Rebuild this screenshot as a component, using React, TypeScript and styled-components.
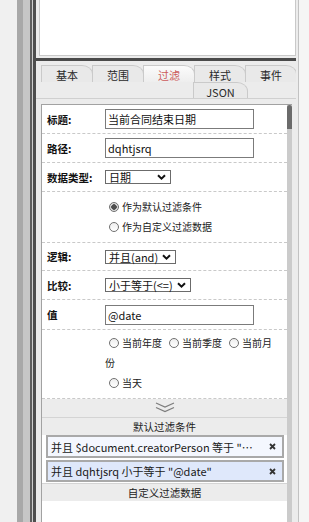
import React from 'react';
import styled, { createGlobalStyle } from 'styled-components';

const GlobalStyle = createGlobalStyle`
    * { box-sizing: border-box; }
    html, body { margin: 0; padding: 0; }
    body {
        font-family: "Noto Sans CJK SC", "Noto Sans", sans-serif;
        color: #1a1a1a;
        background: #f0f0f0;
    }
`;

const tabs = ['基本', '范围', '过滤', '样式', '事件'];
const periods = ['当前年度', '当前季度', '当前月份'];

const ChevronDown = () => (
    <svg width="9" height="6" viewBox="0 0 9 6">
        <path d="M1 1.2 L4.5 4.6 L8 1.2" fill="none" stroke="#111" strokeWidth="2" />
    </svg>
);

const CloseIcon = () => (
    <svg width="7" height="7" viewBox="0 0 7 7">
        <path d="M1 1 L6 6 M6 1 L1 6" stroke="#333" strokeWidth="1.8" />
    </svg>
);

const ExpandIcon = () => (
    <svg width="20" height="11" viewBox="0 0 20 11">
        <path d="M1 1 L10 5 L19 1 M1 5.5 L10 9.5 L19 5.5" fill="none" stroke="#7d7d7d" strokeWidth="1.2" />
    </svg>
);

const App = () => {
    return (
        <Page>
            <GlobalStyle />
            <LeftDock />
            <Splitter />
            <Panel>
                <Preview />
                <DarkBar />
                <TabStrip>
                    <TabRow $h={17}>
                        {tabs.map((t) => (
                            <Tab key={t} $active={t === '过滤'}>
                                {t}
                            </Tab>
                        ))}
                    </TabRow>
                    <TabRow $h={16} $offset={152}>
                        <Tab $wide>JSON</Tab>
                    </TabRow>
                </TabStrip>
                <Body>
                    <ScrollBox>
                        <Content>
                            <FieldRow $h={28}>
                                <Label>标题:</Label>
                                <TextInput readOnly defaultValue="当前合同结束日期" />
                            </FieldRow>
                            <FieldRow $h={28}>
                                <Label>路径:</Label>
                                <TextInput readOnly defaultValue="dqhtjsrq" />
                            </FieldRow>
                            <FieldRow $h={28}>
                                <Label>数据类型:</Label>
                                <Select $w={66}>
                                    日期
                                    <ChevronDown />
                                </Select>
                            </FieldRow>
                            <FieldRow $h={50} $top>
                                <Label />
                                <Options>
                                    <OptionLine>
                                        <RadioDot $checked />
                                        作为默认过滤条件
                                    </OptionLine>
                                    <OptionLine>
                                        <RadioDot />
                                        作为自定义过滤数据
                                    </OptionLine>
                                </Options>
                            </FieldRow>
                            <FieldRow $h={27}>
                                <Label>逻辑:</Label>
                                <Select>
                                    并且(and)
                                    <ChevronDown />
                                </Select>
                            </FieldRow>
                            <FieldRow $h={28}>
                                <Label>比较:</Label>
                                <Select>
                                    小于等于(&lt;=)
                                    <ChevronDown />
                                </Select>
                            </FieldRow>
                            <FieldRow $h={29}>
                                <Label>值</Label>
                                <TextInput readOnly defaultValue="@date" />
                            </FieldRow>
                            <FieldRow $h={68} $top>
                                <Label />
                                <Options $pad={3}>
                                    <WrapLine>
                                        {periods.map((p) => (
                                            <Choice key={p}>
                                                <RadioDot />
                                                {p}
                                            </Choice>
                                        ))}
                                    </WrapLine>
                                    <OptionLine>
                                        <RadioDot />
                                        当天
                                    </OptionLine>
                                </Options>
                            </FieldRow>
                            <Expander>
                                <ExpandIcon />
                            </Expander>
                            <SectionHeader>默认过滤条件</SectionHeader>
                            <ConditionList>
                                <Condition>
                                    <ConditionText>并且 $document.creatorPerson 等于 "@person"</ConditionText>
                                    <CloseIcon />
                                </Condition>
                                <Condition $selected>
                                    <ConditionText>并且 dqhtjsrq 小于等于 "@date"</ConditionText>
                                    <CloseIcon />
                                </Condition>
                            </ConditionList>
                            <SectionHeader $line>自定义过滤数据</SectionHeader>
                        </Content>
                        <Scrollbar>
                            <Thumb />
                        </Scrollbar>
                    </ScrollBox>
                </Body>
            </Panel>
            <RightEdge />
        </Page>
    );
};

const Page = styled.div`
    display: flex;
    width: 309px;
    height: 522px;
    overflow: hidden;
    background: #f0f0f0;
`;

const LeftDock = styled.div`
    width: 17px;
    background: #f0f0f0;
`;

// splitter handle + the dark frame edge of the property panel
const Splitter = styled.div`
    width: 19px;
    background: linear-gradient(
        to right,
        #a8a8a8 0 6px,
        #c6c6c6 6px 13px,
        #5e5e5e 13px 15px,
        #cfcfcf 15px 16px,
        #4e4e4e 16px 19px
    );
`;

const Panel = styled.div`
    width: 260px;
    display: flex;
    flex-direction: column;
    background: #ececec;
`;

const Preview = styled.div`
    height: 56px;
    margin-left: 3px;
    background: #fff;
    border: 1px solid #c9c9c9;
    border-top: none;
`;

const DarkBar = styled.div`
    height: 3px;
    margin-top: 2px;
    background: #4a4a4a;
`;

const TabStrip = styled.div`
    padding: 4px 0 0 5px;
    border-bottom: 1px solid #d0d0d0;
`;

const TabRow = styled.div<{ $h: number; $offset?: number }>`
    display: flex;
    height: ${(p) => p.$h}px;
    padding-left: ${(p) => p.$offset || 0}px;
`;

const Tab = styled.div<{ $active?: boolean; $wide?: boolean }>`
    width: ${(p) => (p.$wide ? 55 : 52)}px;
    margin-right: -1px;
    padding-top: 2px;
    border: 1px solid #cacaca;
    border-bottom: none;
    border-top-right-radius: 11px 9px;
    background: ${(p) => (p.$active ? 'linear-gradient(#fbfbfb, #eeeeee)' : '#e9e9e9')};
    color: ${(p) => (p.$active ? '#cc5b5b' : '#2a2a2a')};
    font-size: 11px;
    line-height: 14px;
    text-align: center;
`;

const Body = styled.div`
    flex: 1;
    display: flex;
    min-height: 0;
    padding: 5px 4px 0 5px;
`;

const ScrollBox = styled.div`
    flex: 1;
    display: flex;
    border-left: 1px solid #a2a2a2;
    border-top: 1px solid #a2a2a2;
    background: #fff;
    overflow: hidden;
`;

const Content = styled.div`
    flex: 1;
    min-width: 0;
`;

const Scrollbar = styled.div`
    width: 5px;
    background: #cbcbcb;
`;

const Thumb = styled.div`
    height: 24px;
    background: #6b6b6b;
    border-radius: 3px 3px 0 0;
`;

const FieldRow = styled.div<{ $h: number; $top?: boolean }>`
    display: flex;
    align-items: ${(p) => (p.$top ? 'flex-start' : 'center')};
    height: ${(p) => p.$h + 1}px;
    padding-left: 5px;
    border-bottom: 1px dashed #c9c9c9;
`;

const Label = styled.div`
    width: 58px;
    flex-shrink: 0;
    font-size: 10.5px;
    font-weight: 700;
    color: #111;
`;

const TextInput = styled.input`
    width: 149px;
    height: 20px;
    padding: 0 2px;
    border: 1px solid #7b7b7b;
    border-radius: 0;
    outline: none;
    font: inherit;
    font-size: 11px;
    color: #111;
    background: #fff;
`;

const Select = styled.div<{ $w?: number }>`
    display: flex;
    align-items: center;
    justify-content: space-between;
    gap: 4px;
    width: ${(p) => (p.$w ? `${p.$w}px` : 'auto')};
    height: 14px;
    padding: 0 4px 0 3px;
    border: 1px solid #6b6b6b;
    font-size: 11px;
    line-height: 12px;
    color: #111;
`;

const Options = styled.div<{ $pad?: number }>`
    padding-top: ${(p) => p.$pad ?? 5}px;
    font-size: 10px;
    line-height: 20px;
    color: #222;
`;

const OptionLine = styled.div`
    display: flex;
    align-items: center;
    height: 20px;
`;

const WrapLine = styled.div`
    width: 170px;
`;

const Choice = styled.span`
    margin-right: 3px;
`;

const RadioDot = styled.span<{ $checked?: boolean }>`
    display: inline-block;
    vertical-align: -1px;
    width: 10px;
    height: 10px;
    margin: 0 3px 0 4px;
    border: 1px solid #707070;
    border-radius: 50%;
    background: ${(p) =>
        p.$checked
            ? 'radial-gradient(circle, #4e4e4e 0 2.5px, #dcdcdc 3px)'
            : 'linear-gradient(#eeeeee, #ffffff)'};
`;

const Expander = styled.div`
    display: flex;
    justify-content: center;
    align-items: center;
    height: 19px;
    padding-bottom: 2px;
    background: #ececec;
    border-bottom: 1px solid #d4d4d4;
`;

const SectionHeader = styled.div<{ $line?: boolean }>`
    height: ${(p) => (p.$line ? 18 : 17)}px;
    background: #ececec;
    border-top: ${(p) => (p.$line ? '1px solid #d4d4d4' : 'none')};
    font-size: 10.5px;
    line-height: 17px;
    text-align: center;
    color: #222;
`;

const ConditionList = styled.div`
    display: flex;
    flex-direction: column;
    gap: 2px;
    padding: 0 3px 1px 4px;
`;

const Condition = styled.div<{ $selected?: boolean }>`
    display: flex;
    align-items: center;
    gap: 8px;
    height: ${(p) => (p.$selected ? 22 : 23)}px;
    padding: 0 6px 0 3px;
    border: 2px solid #a9a9a9;
    background: ${(p) => (p.$selected ? '#dfe8fb' : '#f4f7fe')};
    font-size: 11px;
    color: #1a1a1a;
`;

const ConditionText = styled.span`
    flex: 1;
    min-width: 0;
    overflow: hidden;
    white-space: nowrap;
    text-overflow: ellipsis;
`;

const RightEdge = styled.div`
    flex: 1;
    background: linear-gradient(to right, #ececec 0 2px, #c2c2c2 2px 3px, #f5f5f5 3px);
`;

export default App;
